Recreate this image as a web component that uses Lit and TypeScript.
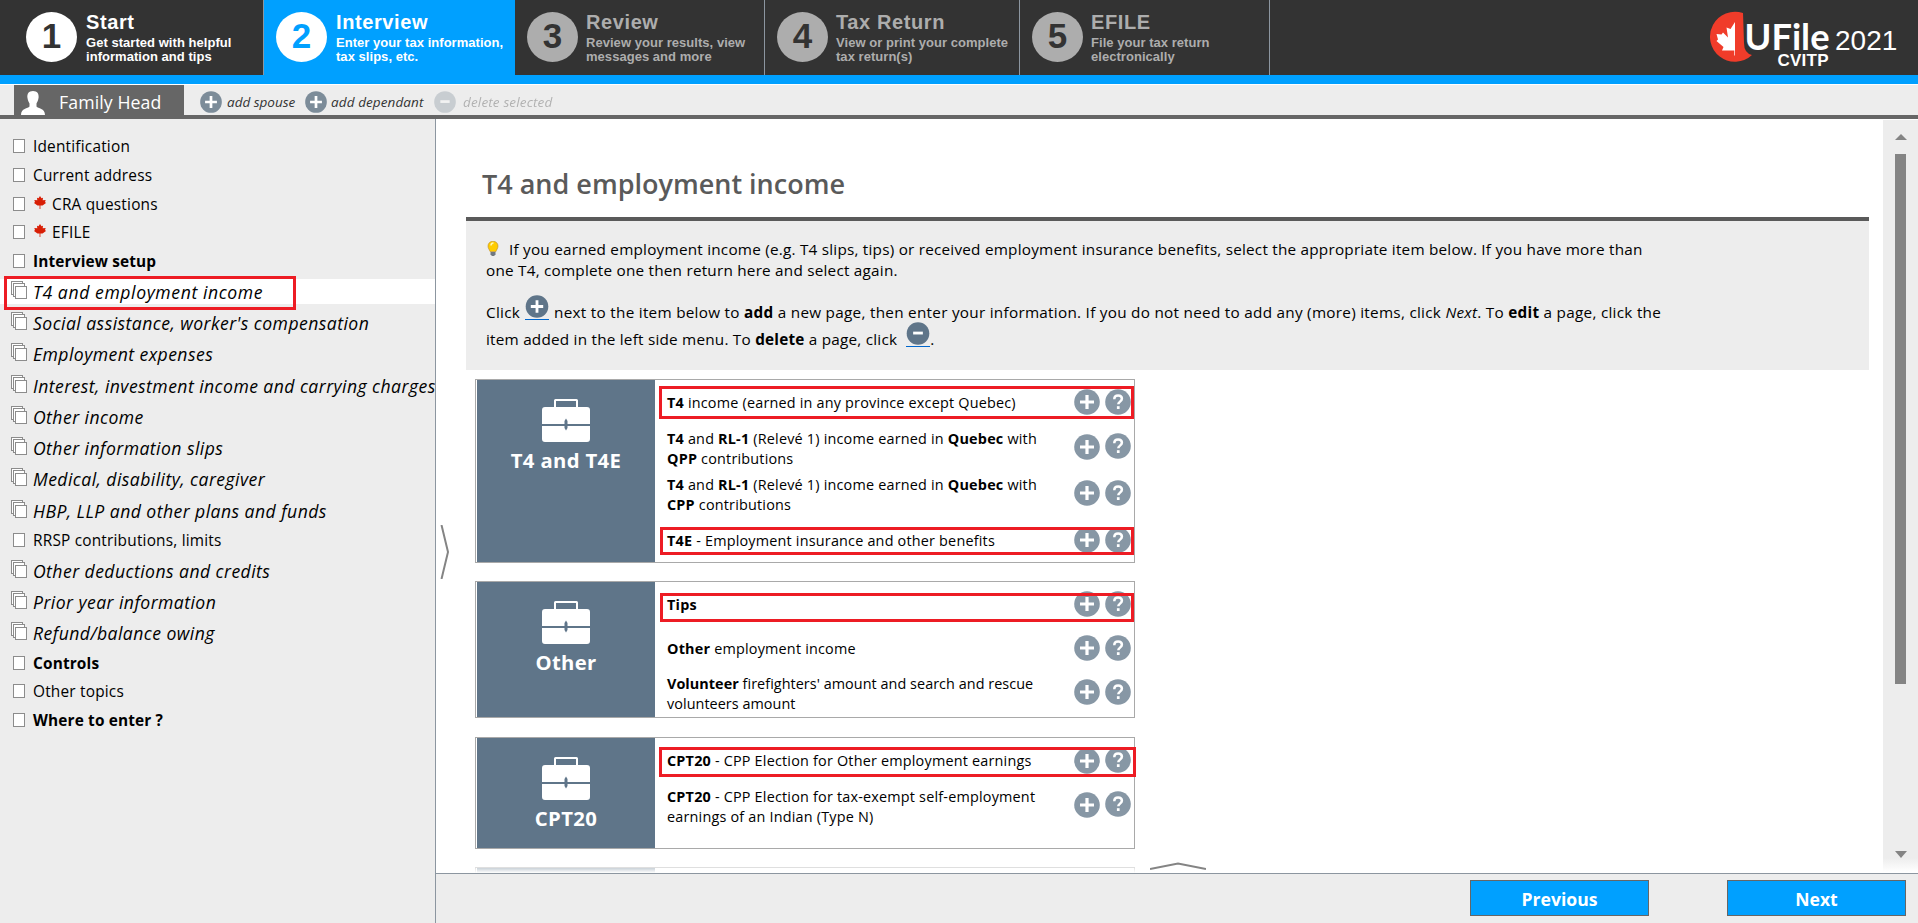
import { LitElement, html, css, svg, nothing } from 'lit';
import { customElement } from 'lit/decorators.js';

const round = (kind: string) => html`<svg class="ic" viewBox="0 0 26 26">
  <circle cx="13" cy="13" r="12.8" fill="currentColor"></circle>
  ${kind === '?'
    ? svg`<path d="M9.300 10.200c0-2.300 1.600-3.700 3.800-3.700s3.800 1.300 3.800 3.300c0 2.700-3.600 2.900-3.600 5.400" fill="none" stroke="#fff" stroke-width="2.500"></path><rect x="11.900" y="17.200" width="2.700" height="2.800" fill="#fff"></rect>`
    : svg`<path d=${kind === '+' ? 'M6 13H20M13 6V20' : 'M7.500 12.500H18.500'} stroke="#fff" stroke-width="3.200"></path>`}
</svg>`;

const leaf = html`<svg class="leaf" viewBox="0 0 12 13"><path d="M6 0 7.500 2.300 9 1.800 8.700 4.200 11.700 4 11 6 12 7 8.500 9.600H6.400V13H5.600V9.600H3.500L0 7 1 6 .3 4 3.300 4.200 3 1.800 4.500 2.300Z" fill="#d81e05"></path></svg>`;

const page = html`<svg class="pg" viewBox="0 0 16 18"><rect x="2.500" y="3.500" width="11" height="13" fill="#fff" stroke="#8c8c8c"></rect></svg>`;
const pages = html`<svg class="pg stack" viewBox="0 0 16 18"><g fill="#fff" stroke="#8c8c8c"><rect x=".5" y=".5" width="11" height="13"></rect><rect x="2.500" y="2.500" width="11" height="13"></rect><rect x="4.500" y="5.500" width="11" height="12"></rect></g></svg>`;

const bag = html`<svg class="bag" viewBox="0 0 48 43"><path d="M13 9V1.500Q13 1 13.500 1H34.500Q35 1 35 1.500V9" fill="none" stroke="#fff" stroke-width="2"></path><path d="M3 8H45Q48 8 48 11V25H0V11Q0 8 3 8ZM0 27H48V40Q48 43 45 43H3Q0 43 0 40Z" fill="#fff"></path><path d="M24 19.500 25.500 22V29L24 31.500 22.500 29V22Z" fill="#5f7589"></path></svg>`;

const steps = [
  ['1', 'Start', 'Get started with helpful', 'information and tips', 's1'],
  ['2', 'Interview', 'Enter your tax information,', 'tax slips, etc.', 's2'],
  ['3', 'Review', 'Review your results, view', 'messages and more', 's3'],
  ['4', 'Tax Return', 'View or print your complete', 'tax return(s)', 's4'],
  ['5', 'EFILE', 'File your tax return', 'electronically', 's5'],
];

const menu: [string, string][] = [
  ['Identification', ''], ['Current address', ''], ['CRA questions', 'flag'], ['EFILE', 'flag'],
  ['Interview setup', 'bold'], ['T4 and employment income', 'multi current'],
  ["Social assistance, worker's compensation", 'multi'], ['Employment expenses', 'multi'],
  ['Interest, investment income and carrying charges', 'multi'], ['Other income', 'multi'],
  ['Other information slips', 'multi'], ['Medical, disability, caregiver', 'multi'],
  ['HBP, LLP and other plans and funds', 'multi'], ['RRSP contributions, limits', ''],
  ['Other deductions and credits', 'multi'], ['Prior year information', 'multi'],
  ['Refund/balance owing', 'multi'], ['Controls', 'bold'], ['Other topics', ''], ['Where to enter ?', 'bold'],
];

const cards = [
  { name: 'T4 and T4E', size: 'c1', rows: [
    ['h44', html`<b>T4</b> income (earned in any province except Quebec)`, 'm1'],
    ['h45 two', html`<b>T4</b> and <b>RL-1</b> (Relevé 1) income earned in <b>Quebec</b> with<br><b>QPP</b> contributions`, ''],
    ['h48 two', html`<b>T4</b> and <b>RL-1</b> (Relevé 1) income earned in <b>Quebec</b> with<br><b>CPP</b> contributions`, ''],
    ['h46', html`<b>T4E</b> - Employment insurance and other benefits`, 'm2'],
  ] },
  { name: 'Other', size: 'c2', rows: [
    ['h44', html`<b>Tips</b>`, 'm3'],
    ['h44', html`<b>Other</b> employment income`, ''],
    ['h44 two snug', html`<b>Volunteer</b> firefighters' amount and search and rescue<br>volunteers amount`, ''],
  ] },
  { name: 'CPT20', size: 'c3', rows: [
    ['h45', html`<b>CPT20</b> - CPP Election for Other employment earnings`, 'm4'],
    ['h43 two', html`<b>CPT20</b> - CPP Election for tax-exempt self-employment<br>earnings of an Indian (Type N)`, ''],
  ] },
];

@customElement('app-root')
export class AppRoot extends LitElement {
  static styles = css`
    :host { display: flex; flex-direction: column; width: 1918px; height: 923px; overflow: hidden; background: #fff; color: #000; font-family: 'Open Sans', 'Noto Sans', sans-serif; }
    * { box-sizing: border-box; }
    svg { display: block; flex: none; }
    header { height: 84px; flex: none; background: #333; border-bottom: 9px solid #00a0ff; display: flex; font-family: 'Liberation Sans', Arial, sans-serif; font-weight: bold; color: #adadad; }
    .step { display: flex; padding: 12px 0 0 12px; border-right: 1px solid #8c96a0; white-space: nowrap; }
    .s1 { width: 264px; padding-left: 26px; color: #fff; }
    .s2 { width: 251px; background: #00a0ff; color: #fff; border: 0; }
    .s3 { width: 250px; } .s4 { width: 255px; } .s5 { width: 250px; }
    .num { width: 51px; height: 50px; border-radius: 50%; background: currentColor; margin-right: 9px; text-align: center; flex: none; }
    .s3 .num, .s4 .num, .s5 .num { margin-right: 8px; }
    .num i { font: bold 35px/47px 'Liberation Sans', sans-serif; color: #333; }
    .s2 .num i { color: #00a0ff; }
    .st { font-size: 20px; line-height: 20px; letter-spacing: .6px; }
    .sd { font-size: 13px; line-height: 14px; margin-top: 3.600px; letter-spacing: .04px; }
    .brand { margin-left: auto; }
    .bar { height: 35px; flex: none; background: #ededed; border-top: 1px solid #fff; border-bottom: 4px solid #666; display: flex; align-items: center; padding-left: 14px; font-size: 13.500px; letter-spacing: .1px; font-style: italic; color: #333; white-space: nowrap; }
    .tab { width: 170px; height: 30px; background: #666; color: #fff; display: flex; align-items: center; font-size: 17.700px; letter-spacing: .1px; font-style: normal; padding: 5px 0 0 7px; gap: 14px; margin-right: 16px; }
    .tab span { padding-bottom: 2px; }
    .bar .ic { width: 22px; height: 22px; color: #7c8c99; margin-right: 5px; }
    .act { display: flex; align-items: center; padding-top: 3px; }
    .a1 { width: 105px; letter-spacing: 0; } .a1 + .act .ic { margin-right: 4px; } .a2 { width: 129px; } .off { opacity: .32; letter-spacing: .15px; } .bar .off .ic { margin-right: 7px; }
    main { flex: 1; display: flex; min-height: 0; }
    nav { width: 436px; background: #ededed; border-right: 1px solid #8c96a0; padding-top: 16px; overflow: hidden; }
    .mi { display: flex; align-items: flex-start; height: 22.500px; margin-bottom: 6.300px; padding-left: 11px; font-size: 15.400px; letter-spacing: .2px; line-height: 24px; white-space: nowrap; position: relative; }
    .pg { width: 16px; height: 18px; margin-right: 6px; margin-top: 1px; }
    .leaf { width: 12px; height: 13px; margin: 3px 6px 0 1px; }
    .bold { font-weight: bold; letter-spacing: .15px; }
    .multi { height: 25px; margin-bottom: 6.250px; font-size: 17.600px; letter-spacing: .44px; line-height: 26px; font-style: italic; }
    .stack { margin-top: 2px; }
    .current { background: #fff; letter-spacing: .6px; }
    .mark { position: absolute; border: 3px solid #ed1c24; pointer-events: none; }
    .current .mark { left: 4px; top: -3px; width: 292px; height: 34px; }
    .m1 { left: 4px; top: 6px; width: 475px; height: 33px; }
    .m2 { left: 5px; top: 10px; width: 474px; height: 28px; }
    .m3 { left: 5px; top: 11px; width: 474px; height: 29px; }
    .m4 { left: 4px; top: 9px; width: 477px; height: 30px; }
    .right { flex: 1; display: flex; flex-direction: column; position: relative; min-width: 0; }
    .view { height: 755px; flex: none; display: flex; overflow: hidden; border-bottom: 1px solid #8c96a0; }
    .body { flex: 1; padding-left: 30px; }
    h1 { margin: 0; height: 102px; padding: 49px 0 0 16px; font-size: 27px; line-height: 32px; font-weight: 600; color: #5a5a5a; border-bottom: 4px solid #5a5a5a; width: 1403px; white-space: nowrap; }
    .tip { width: 1403px; height: 149px; background: #ededed; padding: 18px 20px; font-size: 15.300px; letter-spacing: .22px; line-height: 20.500px; white-space: nowrap; }
    .ln { display: flex; align-items: center; }
    .l3 { margin-top: 18px; height: 29px; letter-spacing: .27px; } .l4 { height: 25px; }
    .btn { height: 25px; border-bottom: 1px solid #0066cc; color: #5f7589; margin: 0 5px 11px; }
    .l4 .btn { margin: 0 0 11px 9px; }
    .btn .ic { width: 24px; height: 23px; }
    .list { padding: 9px 0 0 9px; }
    .card { width: 660px; border: 1px solid #a9a9a9; display: flex; margin-bottom: 18px; padding-left: 1px; }
    .c1 { height: 184px; } .c2 { height: 137px; margin-bottom: 19px; } .c3 { height: 112px; }
    .side { width: 178px; background: #5f7589; color: #fff; font-weight: bold; font-size: 20.300px; letter-spacing: .35px; line-height: 28px; display: flex; flex-direction: column; align-items: center; padding-top: 19px; }
    .bag { width: 48px; height: 43px; margin-bottom: 4px; }
    .rows { flex: 1; }
    .row { display: flex; align-items: center; position: relative; padding-left: 12px; font-size: 14.400px; letter-spacing: .2px; line-height: 20px; white-space: nowrap; }
    .snug { letter-spacing: .05px; }
    .row .ic { width: 26px; height: 26px; color: #8797a5; }
    .row .ic + .ic { margin: 0 3px 1px 5px; }
    .tx { flex: 1; padding-top: 1px; }
    .two .tx { padding-top: 4px; }
    .h43 { height: 43px; } .h44 { height: 44px; } .h45 { height: 45px; } .h46 { height: 46px; } .h48 { height: 48px; }
    .next { width: 660px; height: 6px; border: 1px solid #a9a9a9; border-bottom: 0; padding-left: 1px; -webkit-mask-image: linear-gradient(rgba(0, 0, 0, .4), transparent); mask-image: linear-gradient(rgba(0, 0, 0, .4), transparent); }
    .next .side { height: 5px; padding: 0; }
    .scroll { width: 35px; background: linear-gradient(#ededed 738px, #fff 752px); display: flex; flex-direction: column; align-items: center; padding: 14px 0; margin-top: 1px; }
    .thumb { width: 11px; height: 530px; background: #848484; margin: 14px 0 167px; }
    .handle { position: absolute; left: 4px; top: 406px; }
    .up { position: absolute; left: 714px; top: 743px; }
    footer { flex: 1; background: #ededed; display: flex; justify-content: flex-end; gap: 78px; padding: 6px 12px 0 0; }
    button { width: 179px; height: 36px; background: #00a0ff; border: 1px solid #666; color: #fff; font: bold 17.600px/30px 'Open Sans', sans-serif; padding: 2px 0 0; }
  `;
  render() {
    return html`
      <header>
        ${steps.map(([n, t, a, b, c]) => html`<div class="step ${c}"><div class="num"><i>${n}</i></div><div><div class="st">${t}</div><div class="sd">${a}<br>${b}</div></div></div>`)}
        <svg class="brand" width="212" height="75" viewBox="1706 0 212 75">
          <path d="M1743 13A25 25 0 1 0 1752 55Q1744 53 1744 43Z" fill="#f03c2a"></path>
          <path d="M1735 22V55.500H1734.300V50.500H1722L1723.500 47 1716.500 41 1718 39.500 1716.500 34 1721.500 34.500 1723 32.500 1728 37.500 1726.500 27.500 1730.500 29Z" fill="#fff"></path>
          <g fill="#fff"><text x="1744.500" y="50" font-family="Lato" font-weight="bold" font-size="36.500" textLength="85" lengthAdjust="spacingAndGlyphs">UFile</text>
          <text x="1777.500" y="65.500" font-family="Liberation Sans" font-weight="bold" font-size="17" textLength="51">CVITP</text>
          <text x="1835" y="50" font-family="Liberation Sans" font-weight="normal" font-size="28">2021</text></g>
        </svg>
      </header>
      <div class="bar">
        <div class="tab"><svg width="24" height="24" viewBox="0 0 24 24"><path d="M12 0C16.200 0 18 2.800 17.600 6.500 17.300 9.500 16 11.500 15.500 12.500V15.500C17 17.500 24 17 24 24H0C0 17 7 17.500 8.500 15.500V12.500C8 11.500 6.700 9.500 6.400 6.500 6 2.800 7.800 0 12 0Z" fill="#fff"></path></svg><span>Family Head</span></div>
        <div class="act a1">${round('+')}<span>add spouse</span></div>
        <div class="act a2">${round('+')}<span>add dependant</span></div>
        <div class="act off">${round('-')}<span>delete selected</span></div>
      </div>
      <main>
        <nav>${menu.map(([t, c]) => html`<div class="mi ${c}">${c.includes('multi') ? pages : page}${c === 'flag' ? leaf : nothing}<span>${t}</span>${c.includes('current') ? html`<div class="mark"></div>` : nothing}</div>`)}</nav>
        <div class="right">
          <div class="view">
            <div class="body">
              <h1>T4 and employment income</h1>
              <div class="tip">
                <div class="ln"><svg width="23" height="16" viewBox="0 0 23 16"><path d="M4 10.500C3.500 8.500 2 7.500 2 5A5 4.800 0 0 1 12 5C12 7.500 10.500 8.500 10 10.500Z" fill="#fc0" stroke="#b98a2a" stroke-width=".6"></path><path d="M5 4.500C5 3 6 2 7.500 2" stroke="#fff6b0" stroke-width="1.500" fill="none"></path><path d="M4.500 11H9.500V13.500L8 15H6L4.500 13.500Z" fill="#707880"></path></svg>If you earned employment income (e.g. T4 slips, tips) or received employment insurance benefits, select the appropriate item below. If you have more than</div>
                <div class="ln">one T4, complete one then return here and select again.</div>
                <div class="ln l3"><span>Click</span><span class="btn">${round('+')}</span><span>next to the item below to <b>add</b> a new page, then enter your information. If you do not need to add any (more) items, click <em>Next</em>. To <b>edit</b> a page, click the</span></div>
                <div class="ln l4"><span>item added in the left side menu. To <b>delete</b> a page, click</span><span class="btn">${round('-')}</span>.</div>
              </div>
              <div class="list">
                ${cards.map(c => html`<section class="card ${c.size}"><div class="side">${bag}<span>${c.name}</span></div><div class="rows">${c.rows.map(([k, t, m]) => html`<div class="row ${k}"><div class="tx">${t}</div>${round('+')}${round('?')}${m ? html`<div class="mark ${m}"></div>` : nothing}</div>`)}</div></section>`)}
                <div class="next"><div class="side"></div></div>
              </div>
            </div>
            <div class="scroll"><svg width="12" height="6"><path d="M0 6H12L6 0Z" fill="#848484"></path></svg><div class="thumb"></div><svg width="12" height="7"><path d="M0 0H12L6 7Z" fill="#848484"></path></svg></div>
          </div>
          <svg class="handle" width="10" height="54"><path d="M1.500 0 8 27 1.500 54" fill="none" stroke="#848484" stroke-width="2"></path></svg>
          <svg class="up" width="56" height="8"><path d="M0 7 28 1.500 56 7" fill="none" stroke="#848484" stroke-width="2"></path></svg>
          <footer><button>Previous</button><button>Next</button></footer>
        </div>
      </main>`;
  }
}
